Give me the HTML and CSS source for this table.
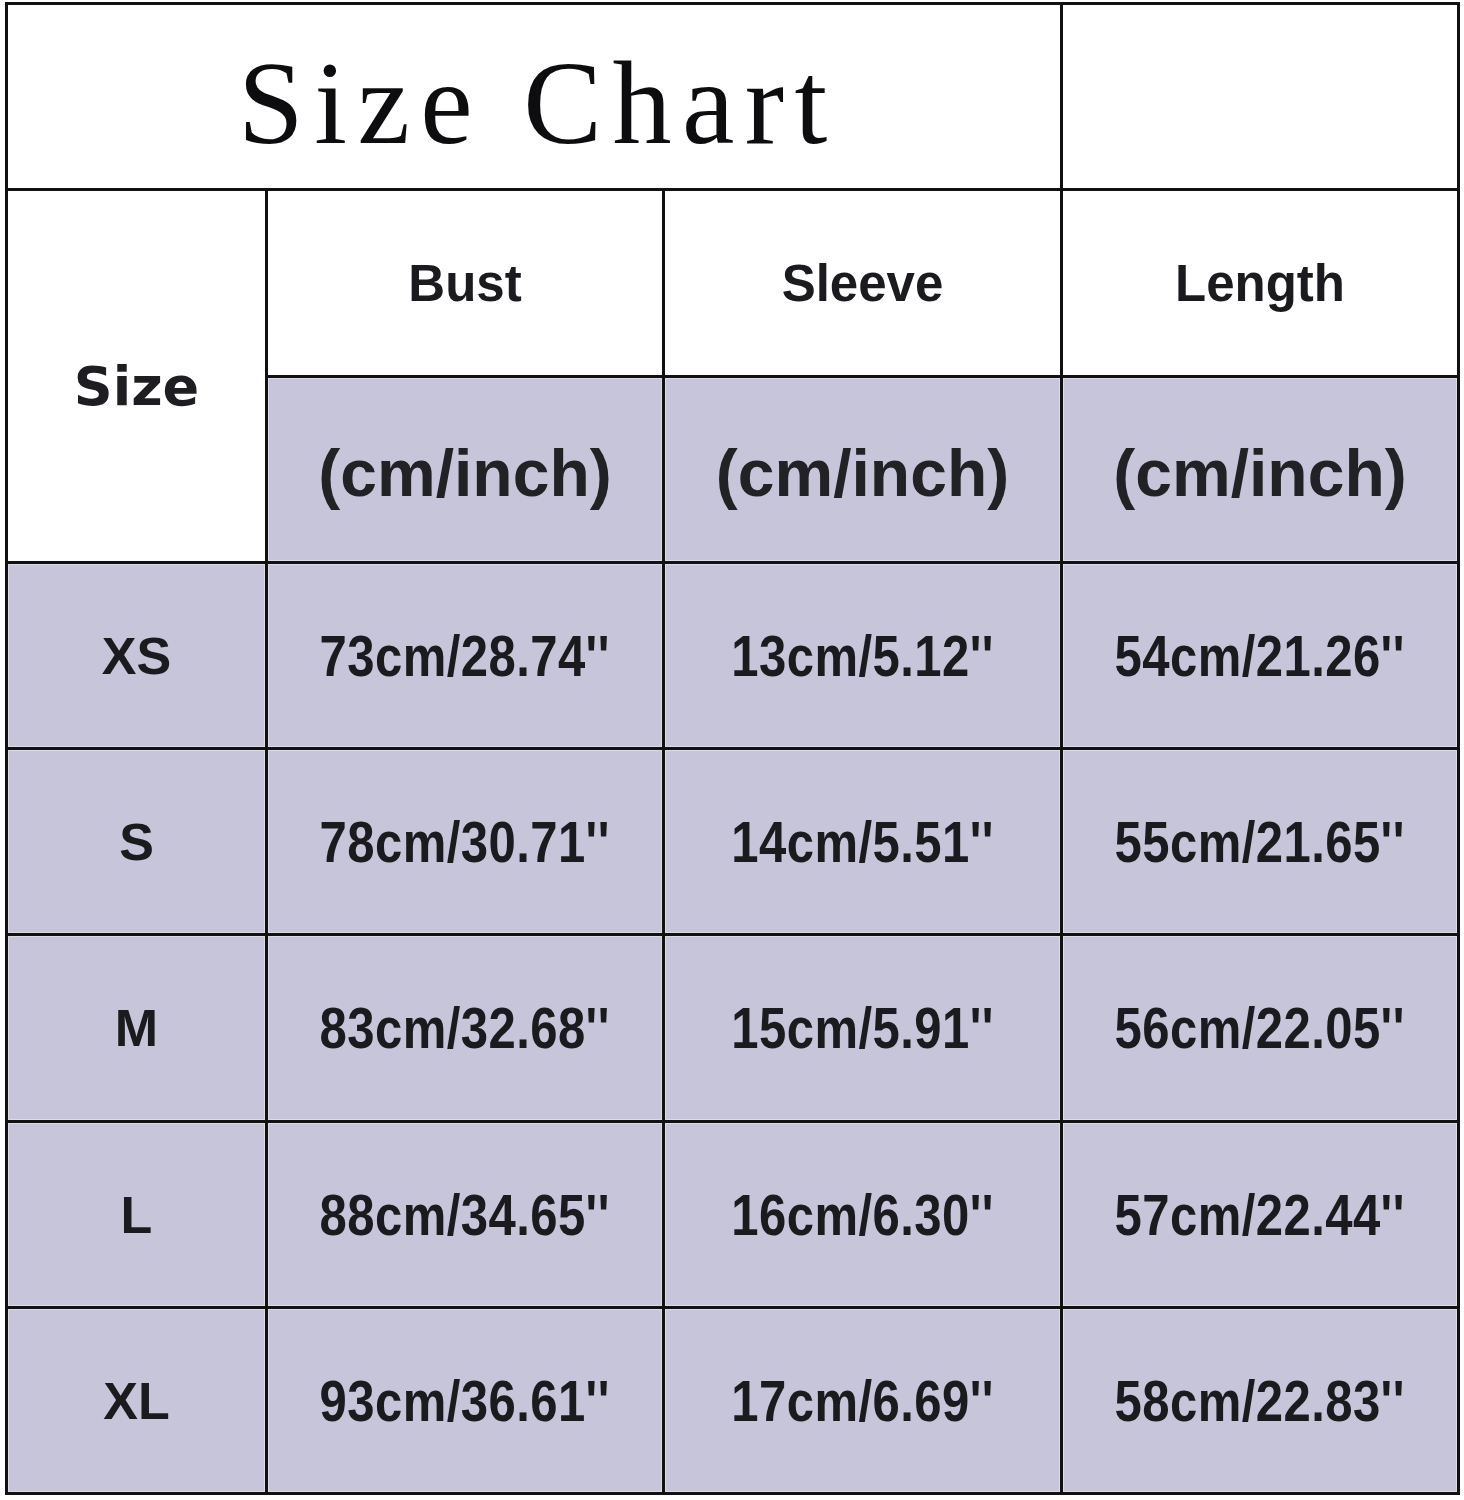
FILE: index.html
```html
<!DOCTYPE html>
<html lang="en">
<head>
<meta charset="utf-8">
<title>Size Chart</title>
<link rel="stylesheet" href="styles.css">
</head>
<body>
<div class="chart">
  <div class="cell title">Size Chart</div>
  <div class="cell blank"></div>

  <div class="cell size-head">Size</div>
  <div class="cell head">Bust</div>
  <div class="cell head">Sleeve</div>
  <div class="cell head">Length</div>
  <div class="cell unit">(cm/inch)</div>
  <div class="cell unit">(cm/inch)</div>
  <div class="cell unit">(cm/inch)</div>

  <div class="cell size">XS</div>
  <div class="cell val"><span>73cm/28.74''</span></div>
  <div class="cell val"><span>13cm/5.12''</span></div>
  <div class="cell val"><span>54cm/21.26''</span></div>

  <div class="cell size">S</div>
  <div class="cell val"><span>78cm/30.71''</span></div>
  <div class="cell val"><span>14cm/5.51''</span></div>
  <div class="cell val"><span>55cm/21.65''</span></div>

  <div class="cell size">M</div>
  <div class="cell val"><span>83cm/32.68''</span></div>
  <div class="cell val"><span>15cm/5.91''</span></div>
  <div class="cell val"><span>56cm/22.05''</span></div>

  <div class="cell size">L</div>
  <div class="cell val"><span>88cm/34.65''</span></div>
  <div class="cell val"><span>16cm/6.30''</span></div>
  <div class="cell val"><span>57cm/22.44''</span></div>

  <div class="cell size">XL</div>
  <div class="cell val"><span>93cm/36.61''</span></div>
  <div class="cell val"><span>17cm/6.69''</span></div>
  <div class="cell val"><span>58cm/22.83''</span></div>
</div>
</body>
</html>
```

FILE: styles.css
```css
html, body {
  margin: 0;
  padding: 0;
  background: #ffffff;
}

body {
  padding: 2px 0 0 5px;
}

.chart {
  display: grid;
  grid-template-columns: 257px 394px 395px 394px;
  grid-template-rows: 183px 184px 183px 183px 183px 184px 183px 183px;
  gap: 3px;
  padding: 3px;
  width: max-content;
  background: #111111;
}

.cell {
  display: flex;
  align-items: center;
  justify-content: center;
  background: #ffffff;
  color: #1b1b1f;
  font-family: "Liberation Sans", Arial, sans-serif;
  font-weight: bold;
  white-space: nowrap;
}

.title {
  grid-column: 1 / 4;
  font-family: "Liberation Serif", "Times New Roman", serif;
  font-weight: normal;
  font-size: 118px;
  letter-spacing: 10.5px;
  padding-left: 8px;
  padding-top: 14px;
  color: #0d0d10;
}

.size-head {
  grid-row: 2 / 4;
  font-family: "DejaVu Sans", Verdana, sans-serif;
  font-size: 54px;
  padding-top: 20px;
  font-weight: bold;
  color: #1d1d22;
}

.head {
  font-size: 51px;
}

.unit,
.size,
.val {
  background: #c6c5d9;
  box-shadow: inset 0 0 0 1px #dcdbe6;
}

.unit {
  font-size: 66px;
  padding-top: 6px;
  color: #222226;
}

.size {
  font-size: 52px;
}

.val {
  font-size: 57px;
}

.val span {
  display: inline-block;
  transform: scaleX(0.86);
  letter-spacing: 0.5px;
}
```
